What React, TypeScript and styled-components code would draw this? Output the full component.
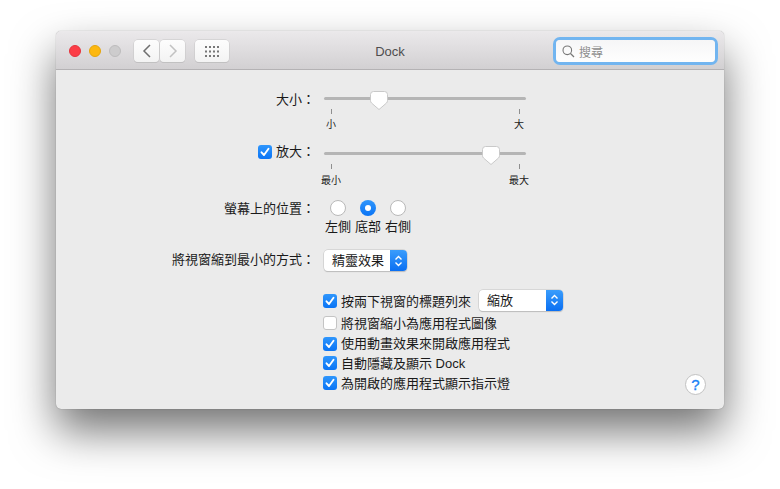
import React from "react";
import styled, { createGlobalStyle } from "styled-components";

const Global = createGlobalStyle`
  html, body { margin: 0; padding: 0; background: #fff; }
  body { font-family: "Liberation Sans", "Noto Sans CJK TC", sans-serif; color: #1a1a1a; }
`;

const Page = styled.div`
  width: 780px;
  height: 489px;
  box-sizing: border-box;
  padding: 31px 56px 80px;
  overflow: hidden;
`;

const Win = styled.div`
  width: 668px;
  height: 378px;
  display: flex;
  flex-direction: column;
  border-radius: 5px;
  overflow: hidden;
  background: #ebebeb;
  box-shadow: 0 0 1px rgba(0,0,0,.45), 0 22px 44px rgba(0,0,0,.55);
`;

const TitleBar = styled.div`
  height: 39px;
  box-sizing: border-box;
  flex: none;
  display: flex;
  align-items: center;
  padding: 2px 7px 0 13px;
  background: linear-gradient(#ebe9eb, #d2d0d2);
  border-bottom: 1px solid #b4b2b4;
  position: relative;
`;

const Light = styled.span<{ $c: string; $b: string }>`
  width: 12px;
  height: 12px;
  box-sizing: border-box;
  border-radius: 50%;
  margin-right: 8px;
  background: ${(p) => p.$c};
  border: 1px solid ${(p) => p.$b};
`;

const ToolBtn = styled.div<{ $w: number; $l?: number }>`
  width: ${(p) => p.$w}px;
  height: 22px;
  box-sizing: border-box;
  margin-left: ${(p) => p.$l ?? 0}px;
  background: linear-gradient(#fdfdfd, #f3f3f3);
  border-radius: 4px;
  box-shadow: 0 0 0 .5px #c6c5c6, 0 1px 0 #bdbcbd;
  display: flex;
  align-items: center;
  justify-content: center;
`;

const Title = styled.div`
  position: absolute;
  left: 0;
  right: 0;
  top: 13px;
  text-align: center;
  font-size: 13px;
  line-height: 16px;
  color: #4e4d4e;
`;

const Search = styled.div`
  margin-left: auto;
  width: 159px;
  height: 22px;
  box-sizing: border-box;
  display: flex;
  align-items: center;
  gap: 4px;
  padding-left: 6px;
  background: linear-gradient(#f6f6f7, #fefefe);
  border-radius: 4px;
  box-shadow: 0 0 0 3px #72b5f0;
  font-size: 12px;
  color: #8e8e8e;
  margin-right: 2px;
`;

const Body = styled.div`
  flex: 1;
  position: relative;
  display: flex;
  flex-direction: column;
`;

const Row = styled.div<{ $h: number; $top?: number }>`
  display: grid;
  grid-template-columns: 259px 1fr;
  column-gap: 9px;
  height: ${(p) => p.$h}px;
  margin-top: ${(p) => p.$top ?? 0}px;
`;

const Label = styled.div<{ $shift?: number }>`
  display: flex;
  justify-content: flex-end;
  align-items: center;
  gap: 4px;
  height: 18px;
  font-size: 13px;
  line-height: 18px;
  margin-top: ${(p) => p.$shift ?? 0}px;
  white-space: nowrap;
`;

const SliderBox = styled.div`
  width: 202px;
  position: relative;
  height: 18px;
`;

const Track = styled.div`
  position: absolute;
  left: 0;
  right: 0;
  top: 6px;
  height: 3px;
  border-radius: 2px;
  background: #b5b5b5;
`;

const ThumbWrap = styled.svg<{ $x: number }>`
  position: absolute;
  left: ${(p) => p.$x}px;
  top: 0;
`;

const Ticks = styled.div`
  width: 202px;
  height: 30px;
  display: flex;
  justify-content: space-between;
  padding: 0 7px;
  box-sizing: border-box;
`;

const Tick = styled.div<{ $gap: number }>`
  width: 16px;
  margin: 0 -8px;
  display: flex;
  flex-direction: column;
  align-items: center;
  font-size: 10px;
  line-height: 12px;
  white-space: nowrap;
  &::before {
    content: "";
    width: 1px;
    height: 5px;
    background: #8f8f8f;
    margin-bottom: ${(p) => p.$gap}px;
  }
`;

const Box = styled.span<{ $on: boolean; $drop?: number }>`
  width: 14px;
  height: 14px;
  flex: none;
  box-sizing: border-box;
  border-radius: 3px;
  display: inline-flex;
  align-items: center;
  justify-content: center;
  margin-top: ${(p) => p.$drop ?? 0}px;
  background: ${(p) => (p.$on ? "linear-gradient(#2f96fc,#0a74f5)" : "#fff")};
  border: ${(p) => (p.$on ? "none" : "1px solid #c4c4c4")};
`;

const Radios = styled.div`
  display: grid;
  grid-template-columns: repeat(3, 30px);
  justify-items: center;
  margin-left: -1px;
  font-size: 13px;
  line-height: 18px;
  white-space: nowrap;
`;

const RadioCell = styled.div`
  display: flex;
  flex-direction: column;
  align-items: center;
  gap: 2px;
`;

const Radio = styled.span<{ $on?: boolean }>`
  width: 16px;
  height: 16px;
  box-sizing: border-box;
  border-radius: 50%;
  display: flex;
  align-items: center;
  justify-content: center;
  background: ${(p) => (p.$on ? "linear-gradient(#2f96fc,#0a74f5)" : "#fff")};
  border: ${(p) => (p.$on ? "none" : "1px solid #b9b9b9")};
  &::after {
    content: "";
    display: ${(p) => (p.$on ? "block" : "none")};
    width: 6px;
    height: 6px;
    border-radius: 50%;
    background: #fff;
  }
`;

const Popup = styled.div<{ $l?: number; $w: number }>`
  width: ${(p) => p.$w}px;
  height: 21px;
  margin-left: ${(p) => p.$l ?? 0}px;
  display: flex;
  border-radius: 4px;
  overflow: hidden;
  background: #fff;
  box-shadow: 0 0 0 .5px #c4c4c4, 0 1px 1px #b5b5b5;
  font-size: 13px;
  line-height: 21px;
`;

const PopupText = styled.div`
  flex: 1;
  padding-left: 8px;
`;

const PopupArrow = styled.div`
  width: 17px;
  background: linear-gradient(#3a9dfc, #0a6ff2);
  display: flex;
  align-items: center;
  justify-content: center;
`;

const Checks = styled.div`
  display: flex;
  flex-direction: column;
  margin: 18px 0 0 267px;
`;

const Check = styled.div<{ $h: number }>`
  display: flex;
  align-items: center;
  gap: 4px;
  height: ${(p) => p.$h}px;
  font-size: 13px;
  white-space: nowrap;
`;

const Help = styled.div`
  position: absolute;
  right: 18px;
  bottom: 14px;
  width: 21px;
  height: 21px;
  box-sizing: border-box;
  border-radius: 50%;
  background: #fff;
  border: 1px solid #c2c2c2;
  display: flex;
  align-items: center;
  justify-content: center;
  color: #1b82f5;
  font-size: 15px;
  -webkit-text-stroke: .35px #1b82f5;
`;

const Tickmark = () => (
  <svg width="10" height="10" viewBox="0 0 10 10">
    <path d="M1.500 5.300 L4 8 L8.500 1.800" fill="none" stroke="#fff" strokeWidth="1.900" strokeLinecap="round" strokeLinejoin="round" />
  </svg>
);

const Updown = () => (
  <svg width="9" height="14" viewBox="0 0 9 14">
    <path d="M1.500 5.500 L4.500 2.500 L7.500 5.500 M1.500 8.500 L4.500 11.500 L7.500 8.500" fill="none" stroke="#fff" strokeWidth="1.400" />
  </svg>
);

const Thumb = ({ x }: { x: number }) => (
  <ThumbWrap $x={x} width="18" height="19" viewBox="0 0 18 19">
    <path d="M3.500 .5 H14.500 Q17.500 .5 17.500 3.500 V9.500 Q17.500 11 16.500 12 L9 18.500 L1.500 12 Q.5 11 .5 9.500 V3.500 Q.5 .5 3.500 .5 Z" fill="#fff" stroke="#c9c9c9" strokeWidth="1" />
  </ThumbWrap>
);

export default function App() {
  return (
    <>
      <Global />
      <Page>
        <Win>
          <TitleBar>
            <Light $c="#fc3d47" $b="#e5333d" />
            <Light $c="#fdb80f" $b="#e5a50c" />
            <Light $c="#cdcccd" $b="#bdbcbd" />
            <ToolBtn $w={25} $l={5}>
              <svg width="10" height="14" viewBox="0 0 10 14">
                <path d="M8 1 L2 7 L8 13" fill="none" stroke="#6f6f6f" strokeWidth="1.500" />
              </svg>
            </ToolBtn>
            <ToolBtn $w={25} $l={1}>
              <svg width="10" height="14" viewBox="0 0 10 14">
                <path d="M2 1 L8 7 L2 13" fill="none" stroke="#c2c2c2" strokeWidth="1.500" />
              </svg>
            </ToolBtn>
            <ToolBtn $w={34} $l={10}>
              <svg width="16" height="11" viewBox="0 0 16 11">
                <path d="M1 0h2v2H1zM5 0h2v2H5zM9 0h2v2H9zM13 0h2v2h-2zM1 4.500h2v2H1zM5 4.500h2v2H5zM9 4.500h2v2H9zM13 4.500h2v2h-2zM1 9h2v2H1zM5 9h2v2H5zM9 9h2v2H9zM13 9h2v2h-2z" fill="#777" />
              </svg>
            </ToolBtn>
            <Title>Dock</Title>
            <Search>
              <svg width="13" height="13" viewBox="0 0 13 13">
                <circle cx="5.300" cy="5.300" r="4.300" fill="none" stroke="#777" strokeWidth="1.100" />
                <path d="M8.500 8.500 L12 12" stroke="#777" strokeWidth="1.300" />
              </svg>
              搜尋
            </Search>
          </TitleBar>
          <Body>
            <Row $h={18} $top={21}>
              <Label>大小：</Label>
              <SliderBox>
                <Track />
                <Thumb x={46} />
              </SliderBox>
            </Row>
            <Row $h={37}>
              <span />
              <Ticks>
                <Tick $gap={5}>小</Tick>
                <Tick $gap={5}>大</Tick>
              </Ticks>
            </Row>
            <Row $h={18}>
              <Label $shift={-3}>
                <Box $on>
                  <Tickmark />
                </Box>
                放大：
              </Label>
              <SliderBox>
                <Track />
                <Thumb x={158} />
              </SliderBox>
            </Row>
            <Row $h={36}>
              <span />
              <Ticks>
                <Tick $gap={6}>最小</Tick>
                <Tick $gap={6}>最大</Tick>
              </Ticks>
            </Row>
            <Row $h={38}>
              <Label>螢幕上的位置：</Label>
              <Radios>
                <RadioCell>
                  <Radio />
                  左側
                </RadioCell>
                <RadioCell>
                  <Radio $on />
                  底部
                </RadioCell>
                <RadioCell>
                  <Radio />
                  右側
                </RadioCell>
              </Radios>
            </Row>
            <Row $h={21} $top={12}>
              <Label $shift={1}>將視窗縮到最小的方式：</Label>
              <Popup $w={83}>
                <PopupText>精靈效果</PopupText>
                <PopupArrow>
                  <Updown />
                </PopupArrow>
              </Popup>
            </Row>
            <Checks>
              <Check $h={22}>
                <Box $on $drop={2}>
                  <Tickmark />
                </Box>
                按兩下視窗的標題列來
                <Popup $w={84} $l={4}>
                  <PopupText>縮放</PopupText>
                  <PopupArrow>
                    <Updown />
                  </PopupArrow>
                </Popup>
              </Check>
              <Check $h={22}>
                <Box $on={false} $drop={2} />
                將視窗縮小為應用程式圖像
              </Check>
              <Check $h={19}>
                <Box $on $drop={2}>
                  <Tickmark />
                </Box>
                使用動畫效果來開啟應用程式
              </Check>
              <Check $h={20}>
                <Box $on $drop={2}>
                  <Tickmark />
                </Box>
                自動隱藏及顯示 Dock
              </Check>
              <Check $h={20}>
                <Box $on $drop={2}>
                  <Tickmark />
                </Box>
                為開啟的應用程式顯示指示燈
              </Check>
            </Checks>
            <Help>?</Help>
          </Body>
        </Win>
      </Page>
    </>
  );
}
